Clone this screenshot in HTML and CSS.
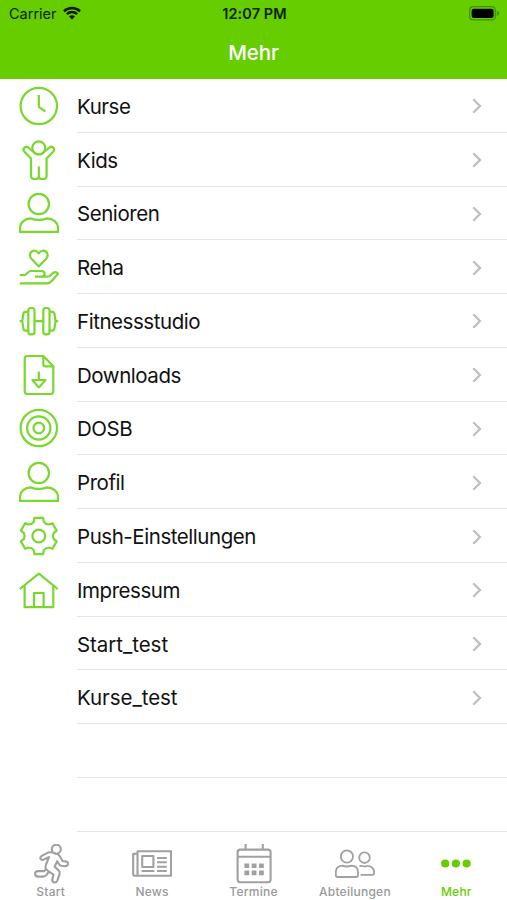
FILE: index.html
```html
<!DOCTYPE html>
<html lang="de">

<head>
    <meta charset="UTF-8">
    <meta name="viewport" content="width=device-width, initial-scale=1.0">
    <title>Mehr</title>
    <link rel="stylesheet" href="styles.css">
</head>

<body>
    <svg class="sprite">
        <symbol id="user" viewBox="0 0 40 40">
            <circle cx="19.8" cy="11" r="10.2" />
            <path d="M1 38.9V35C1 29 6 25.6 12 25.4C16 27.4 23.6 27.4 27.6 25.4C34 25.6 39 29 39 35V38.9Z" />
        </symbol>
        <symbol id="arrow" viewBox="0 0 10 16">
            <path d="M1.3 1.3L8 8L1.3 14.7" />
        </symbol>
    </svg>

    <header class="header">
        <div class="status">
            <div class="carrier">
                <span>Carrier</span>
                <svg class="wifi" viewBox="0 0 18 14">
                    <path d="M1 5.2A11.5 11.5 0 0 1 17 5.2" />
                    <path d="M3.9 8.1A7.3 7.3 0 0 1 14.1 8.1" />
                    <path class="fill" d="M9 13.6L6 10.6A4.3 4.3 0 0 1 12 10.6Z" />
                </svg>
            </div>
            <div class="time">12:07 PM</div>
            <div class="battery">
                <svg viewBox="0 0 31 15">
                    <rect class="case" x="0.7" y="0.7" width="25.6" height="13.2" rx="3.5" />
                    <rect x="2.6" y="2.7" width="22" height="9.2" rx="2" />
                    <path class="cap" d="M27.8 4.8Q30.3 5.6 30.3 7.3T27.8 9.8Z" />
                </svg>
            </div>
        </div>
        <h1 class="title">Mehr</h1>
    </header>

    <ul class="list">
        <li>
            <svg class="icon" viewBox="0 0 40 40">
                <circle cx="19.8" cy="20" r="18.2" />
                <path d="M19.8 9V20.8L26.5 25.7" />
            </svg>
            <div class="row"><span>Kurse</span><svg class="arrow"><use href="#arrow" /></svg></div>
        </li>
        <li>
            <svg class="icon" viewBox="0 0 40 40">
                <circle cx="19.8" cy="7.9" r="6.5" />
                <path d="M14.6 12L9 7.4A2.8 2.8 0 0 0 5 11.2L12 18.6V36A3.2 3.2 0 0 0 15.2 39H16.8A3 3 0 0 0 19.8 36V27.3V36A3 3 0 0 0 22.8 39H24.4A3.2 3.2 0 0 0 27.6 36V18.6L34.6 11.2A2.8 2.8 0 0 0 30.6 7.4L25 12C23 15.3 16.6 15.3 14.6 12Z" />
            </svg>
            <div class="row"><span>Kids</span><svg class="arrow"><use href="#arrow" /></svg></div>
        </li>
        <li>
            <svg class="icon"><use href="#user" /></svg>
            <div class="row"><span>Senioren</span><svg class="arrow"><use href="#arrow" /></svg></div>
        </li>
        <li>
            <svg class="icon" viewBox="0 0 40 40">
                <path d="M19.8 19.4L12 11.2C8.2 6 15.5 0.2 19.8 6.3C24.1 0.2 31.4 6 27.6 11.2Z" />
                <path d="M0.8 28H6L9.5 25Q10.8 24 12.5 24H22.5Q25.6 24.2 25.6 26.8T22.8 29.7H16M22.8 29.7H28Q30 29.7 31.5 28.2L34 26Q37 23.9 39 26.6L33 33.8Q31 36.3 28 36.3H0.8" />
            </svg>
            <div class="row"><span>Reha</span><svg class="arrow"><use href="#arrow" /></svg></div>
        </li>
        <li>
            <svg class="icon" viewBox="0 0 40 40">
                <rect x="9.3" y="7" width="6.2" height="26.4" rx="2.4" />
                <rect x="24.3" y="7" width="6.2" height="26.4" rx="2.4" />
                <path d="M9.3 10.8H6.6Q4.6 10.8 4.4 12.8L3.2 20L4.4 27.6Q4.6 29.6 6.6 29.6H9.3M30.5 10.8H33.2Q35.2 10.8 35.4 12.8L36.6 20L35.4 27.6Q35.2 29.6 33.2 29.6H30.5M0.6 20.2H3.2M15.5 20.2H24.3M36.6 20.2H39.2" />
            </svg>
            <div class="row"><span>Fitnessstudio</span><svg class="arrow"><use href="#arrow" /></svg></div>
        </li>
        <li>
            <svg class="icon" viewBox="0 0 40 40">
                <path d="M24.3 1H8.5Q5.7 1 5.7 3.8V36.2Q5.7 39 8.5 39H31.5Q34.3 39 34.3 36.2V11.3L24.3 1V9Q24.3 11.3 26.6 11.3H34.3" />
                <path d="M19.8 16.5V25M13.4 25H26.4L20.8 31.6Q19.9 32.6 19 31.6Z" />
            </svg>
            <div class="row"><span>Downloads</span><svg class="arrow"><use href="#arrow" /></svg></div>
        </li>
        <li>
            <svg class="icon" viewBox="0 0 40 40">
                <circle cx="19.8" cy="20" r="18.2" />
                <circle cx="19.8" cy="20" r="11.7" />
                <circle cx="19.8" cy="20" r="5.3" />
            </svg>
            <div class="row"><span>DOSB</span><svg class="arrow"><use href="#arrow" /></svg></div>
        </li>
        <li>
            <svg class="icon"><use href="#user" /></svg>
            <div class="row"><span>Profil</span><svg class="arrow"><use href="#arrow" /></svg></div>
        </li>
        <li>
            <svg class="icon" viewBox="-19.8 -20 40 40">
                <circle r="6.4" />
                <path d="M-4.3-18.2H4.3L5-14.2Q6.8-11.7 9.9-11.5L13.6-12.8L17.9-5.4L14.8-2.8Q13.6 0 14.8 2.8L17.9 5.4L13.6 12.8L9.9 11.5Q6.8 11.7 5 14.2L4.3 18.2H-4.3L-5 14.2Q-6.8 11.7-9.9 11.5L-13.6 12.8L-17.9 5.4L-14.8 2.8Q-13.6 0-14.8-2.8L-17.9-5.4L-13.6-12.8L-9.9-11.5Q-6.8-11.7-5-14.2Z" />
            </svg>
            <div class="row"><span>Push-Einstellungen</span><svg class="arrow"><use href="#arrow" /></svg></div>
        </li>
        <li>
            <svg class="icon" viewBox="0 0 40 40">
                <path d="M0.8 19L19.8 3.6L38.8 19M5.6 15.4V37.2H34.3V15.4M15 37.2V23H24.6V37.2" />
            </svg>
            <div class="row"><span>Impressum</span><svg class="arrow"><use href="#arrow" /></svg></div>
        </li>
        <li>
            <div class="row wide"><span>Start_test</span><svg class="arrow"><use href="#arrow" /></svg></div>
        </li>
        <li>
            <div class="row wide"><span>Kurse_test</span><svg class="arrow"><use href="#arrow" /></svg></div>
        </li>
        <li>
            <div class="row"></div>
        </li>
        <li>
            <div class="row"></div>
        </li>
    </ul>

    <nav class="tabs">
        <a class="tab">
            <svg viewBox="0 0 40 40">
                <circle cx="25.3" cy="5.2" r="4.5" />
                <path d="M17 8.6L10.3 12.2Q8.4 14 10 15.4Q11.2 16.4 13 15.4L18 13L15 20.5Q14 23.2 15 25L13.3 27.1H6.5Q4 27.6 4.1 30Q4.4 32.4 7 32.6H12.5Q14.6 32.4 15.6 30.8L17.8 27.6L22.6 30.6L21.2 35.6Q21 37.8 23 38.4Q25.4 38.8 26.3 36.6L28.7 29.6Q29 27.6 27.6 26.4L23.6 22.8L26.2 17.2L28.2 20.4Q29 21.6 30.4 21.8L34 22.2Q36.6 22.2 37 20Q37 17.8 34.6 17.4L31.6 17L28.8 12.2Q27.4 10 25 9.8Q20 7.6 17 8.6ZM17.8 27.6L15 25" />
            </svg>
            <span>Start</span>
        </a>
        <a class="tab">
            <svg viewBox="0 0 40 40">
                <path d="M5.5 31.7V7.2H39V31.7H3Q1.2 31.7 1.2 29.9V9.8H5.5M25 14H34.8M25 18.3H34.8M25 22.7H34.8M25 27H34.8M9.6 27H22.4" />
                <rect x="10.2" y="12" width="11.2" height="11" />
            </svg>
            <span>News</span>
        </a>
        <a class="tab">
            <svg viewBox="0 0 40 40">
                <rect x="3.6" y="5.6" width="33" height="32.6" rx="2.6" />
                <path d="M3.6 12.8H36.6M11.6 0V5.6M28.8 0V5.6" />
                <path class="days" d="M12.8 19.4V24M20.1 19.4V24M27.4 19.4V24M12.8 26.6V31.2M20.1 26.6V31.2M27.4 26.6V31.2" />
            </svg>
            <span>Termine</span>
        </a>
        <a class="tab">
            <svg class="thin" viewBox="0 0 40 40">
                <circle cx="11.9" cy="12.5" r="6.1" />
                <circle cx="29.5" cy="13.7" r="5.3" />
                <path d="M7.4 21.6Q12 23.4 16.4 21.6Q23 21.8 23 28.5V31Q23 33 21 33H2.8Q0.8 33 0.8 31V28.5Q0.8 21.8 7.4 21.6Z" />
                <path d="M24.4 22.2L26.6 21.8Q29.7 23.2 32.8 21.8Q39 22.4 39.2 28.6Q39.2 30.8 37.4 30.8H25.7" />
            </svg>
            <span>Abteilungen</span>
        </a>
        <a class="tab active">
            <svg viewBox="0 0 40 40">
                <circle cx="9.2" cy="19.5" r="4.1" />
                <circle cx="19.9" cy="19.5" r="4.1" />
                <circle cx="30.6" cy="19.5" r="4.1" />
            </svg>
            <span>Mehr</span>
        </a>
    </nav>
</body>

</html>
```

FILE: styles.css
```css
* {
    margin: 0;
    padding: 0;
    box-sizing: border-box;
}

body {
    width: 507px;
    height: 900px;
    overflow: hidden;
    background: #fff;
    color: #111;
    font-family: Inter, "Liberation Sans", sans-serif;
}

svg {
    display: block;
    fill: none;
    stroke-linejoin: round;
}

.sprite {
    display: none;
}

.header {
    height: 79px;
    background: #66cd00;
}

.status {
    display: grid;
    grid-template-columns: 1fr auto 1fr;
    align-items: center;
    height: 27px;
    padding: 0 7px 0 9px;
    font-size: 14.5px;
    color: #0c2400;
}

.carrier {
    display: flex;
    align-items: center;
    gap: 6px;
}

.wifi {
    width: 18px;
    height: 14px;
    margin-top: -2px;
    stroke: #0a1800;
    stroke-width: 2.6;
}

.wifi .fill {
    fill: #0a1800;
    stroke: none;
}

.time {
    font-weight: 600;
    letter-spacing: 0.1px;
}

.battery {
    justify-self: end;
}

.battery svg {
    width: 31px;
    height: 15px;
    margin-top: -1px;
    fill: #000;
}

.battery .case {
    fill: none;
    stroke: #429000;
    stroke-width: 1.2;
}

.battery .cap {
    fill: #429000;
}

.title {
    line-height: 51px;
    text-align: center;
    font-size: 20.5px;
    font-weight: 500;
    letter-spacing: -0.1px;
    color: #fff;
}

.list {
    list-style: none;
}

.list li {
    display: flex;
    justify-content: flex-end;
    align-items: center;
    height: 53.77px;
}

.icon {
    width: 40px;
    height: 40px;
    margin-right: 18px;
    stroke: #78d82d;
    stroke-width: 2.2;
}

.row {
    display: flex;
    justify-content: space-between;
    align-items: center;
    width: 430px;
    height: 100%;
    padding: 2px 25px 0 0;
    border-bottom: 1px solid #e6e6e6;
    font-size: 20.5px;
    letter-spacing: -0.45px;
}

.wide {
    letter-spacing: -0.05px;
}

.arrow {
    width: 10px;
    height: 16px;
    stroke: #bfbfc1;
    stroke-width: 2.3;
    stroke-linejoin: miter;
}

.tabs {
    display: flex;
    padding-top: 12px;
}

.tab {
    display: flex;
    flex: 1;
    flex-direction: column;
    align-items: center;
    font-size: 12px;
    font-weight: 500;
    line-height: 15px;
    letter-spacing: 0.25px;
    color: #999;
}

.tab svg {
    width: 40px;
    height: 40px;
    stroke: #a0a0a0;
    stroke-width: 2.1;
}

.tab .thin {
    stroke-width: 1.8;
}

.tab .days {
    stroke-width: 4.8;
}

.active {
    color: #66cd00;
}

.active svg {
    fill: #66cd00;
    stroke: none;
}
```
